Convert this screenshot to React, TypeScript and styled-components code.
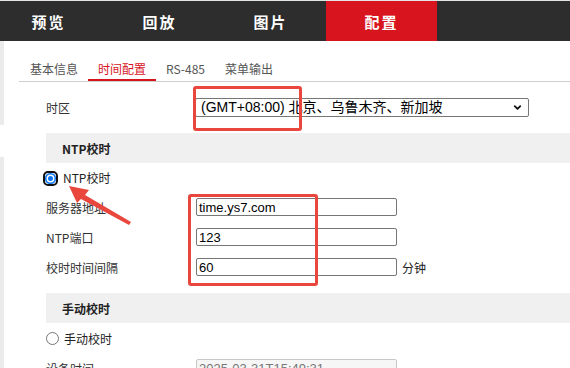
import * as React from "react";
import styled, { createGlobalStyle } from "styled-components";
import { ChevronDown } from "lucide-react";

const GlobalStyle = createGlobalStyle`
  html, body {
    margin: 0;
    padding: 0;
    background: #fff;
  }
  body {
    font-family: "Liberation Sans", Arial, "Noto Sans CJK SC", sans-serif;
    font-size: 12px;
    color: #333;
  }
`;

const SPage = styled.div`
  position: relative;
  width: 570px;
  height: 368px;
  overflow: hidden;
  border-top: 1px solid #e4e4e4;
  box-sizing: border-box;
  display: flex;
  flex-direction: column;
`;

const STopBar = styled.div`
  height: 40px;
  background: #2d2d2d;
  display: flex;
  flex-shrink: 0;
`;

const SNavList = styled.div`
  display: flex;
  margin-left: -7px;
`;

const SNavItem = styled.div<{ $active?: boolean }>`
  width: 111px;
  height: 40px;
  display: flex;
  align-items: center;
  justify-content: center;
  color: #fff;
  font-family: "Noto Sans CJK SC", sans-serif;
  font-size: 15px;
  font-weight: 700;
  letter-spacing: 2px;
  background: ${p => (p.$active ? "#d8141e" : "transparent")};
`;

const SBody = styled.div`
  flex: 1;
  display: flex;
  min-height: 0;
`;

const SRail = styled.div`
  width: 4px;
  display: flex;
  flex-direction: column;
  flex-shrink: 0;
`;

const SRailPiece = styled.div<{ $h?: number; $gap?: boolean }>`
  height: ${p => (p.$h ? `${p.$h}px` : "auto")};
  flex: ${p => (p.$h ? "none" : 1)};
  background: ${p => (p.$gap ? "#fff" : "#ebebeb")};
`;

const SContent = styled.div`
  flex: 1;
  padding-left: 15px;
  min-width: 0;
`;

const STabBar = styled.div`
  display: flex;
  border-bottom: 1px solid #cfcfcf;
  padding-left: 1px;
`;

const STab = styled.div<{ $active?: boolean }>`
  padding: 20px 10px 2px;
  line-height: 16px;
  font-size: 12px;
  font-family: "Noto Sans CJK SC", sans-serif;
  color: ${p => (p.$active ? "#d8141e" : "#555")};
  border-bottom: 2px solid ${p => (p.$active ? "#d8141e" : "transparent")};
`;

const SForm = styled.div`
  padding: 10px 0 0 27px;
  display: flex;
  flex-direction: column;
`;

const SRow = styled.div`
  height: 30px;
  display: flex;
  align-items: center;
`;

const SLabel = styled.div`
  width: 150px;
  flex-shrink: 0;
  font-family: "Noto Sans CJK SC", sans-serif;
  font-size: 12px;
  color: #333;
`;

const SSelectWrap = styled.div`
  position: relative;
  margin-left: -1px;
`;

const SSelect = styled.select`
  appearance: none;
  width: 334px;
  height: 19px;
  box-sizing: border-box;
  border: 1px solid #767676;
  border-radius: 2px;
  padding: 0 0 0 5px;
  font-family: "Liberation Sans", Arial, "Noto Sans CJK SC", sans-serif;
  font-size: 14px;
  line-height: 17px;
  color: #000;
  background: #fff;
`;

const SChevron = styled.span`
  position: absolute;
  right: 6px;
  top: 4px;
  display: flex;
  pointer-events: none;
  color: #111;
`;

const SInput = styled.input`
  width: 201px;
  height: 18px;
  box-sizing: border-box;
  border: 1px solid #767676;
  border-radius: 2px;
  padding: 0 0 0 2px;
  font-family: "Liberation Sans", Arial, sans-serif;
  font-size: 13px;
  color: #000;
  background: #fff;
  &:disabled {
    background: #f6f6f6;
    border-color: #c8c8c8;
    color: #777;
  }
`;

const SUnit = styled.span`
  margin-left: 5px;
  font-family: "Noto Sans CJK SC", sans-serif;
  font-size: 12px;
  color: #222;
`;

const SSection = styled.div`
  margin-top: 11px;
  height: 30px;
  background: #f0f0f0;
  display: flex;
  align-items: center;
  padding-left: 16px;
  font-family: "Noto Sans CJK SC", sans-serif;
  font-size: 12px;
  font-weight: 700;
  color: #222;
`;

const SRadioRow = styled.label<{ $h: number }>`
  height: ${p => p.$h}px;
  display: flex;
  align-items: center;
  font-family: "Noto Sans CJK SC", sans-serif;
  font-size: 12px;
  color: #222;
`;

const SRadioFocus = styled.span`
  width: 15px;
  height: 15px;
  box-sizing: border-box;
  margin: 2px 5px 0 -3px;
  border: 2px solid #111;
  border-radius: 5px;
  display: flex;
  align-items: center;
  justify-content: center;
  & > span {
    width: 11px;
    height: 11px;
    border-radius: 50%;
    background: #0a74f5;
    box-shadow: inset 0 0 0 1.5px #0a74f5, inset 0 0 0 3px #fff;
  }
`;

const SRadioOff = styled.span`
  width: 13px;
  height: 13px;
  box-sizing: border-box;
  margin-right: 5px;
  border: 1px solid #767676;
  border-radius: 50%;
  background: #fff;
`;

const SMark = styled.div`
  position: absolute;
  border: 3px solid #e9473d;
  border-radius: 3px;
  box-sizing: border-box;
  pointer-events: none;
`;

const SArrow = styled.svg`
  position: absolute;
  left: 0;
  top: 0;
  pointer-events: none;
`;

const navItems = ["预览", "回放", "图片", "配置"];
const tabs = ["基本信息", "时间配置", "RS-485", "菜单输出"];

const App = () => {
  return (
    <SPage>
      <GlobalStyle />
      <STopBar>
        <SNavList>
          {navItems.map(item => (
            <SNavItem key={item} $active={item === "配置"}>
              {item}
            </SNavItem>
          ))}
        </SNavList>
      </STopBar>
      <SBody>
        <SRail>
          <SRailPiece $h={84} />
          <SRailPiece $h={32} $gap />
          <SRailPiece />
        </SRail>
        <SContent>
          <STabBar>
            {tabs.map(tab => (
              <STab key={tab} $active={tab === "时间配置"}>
                {tab}
              </STab>
            ))}
          </STabBar>
          <SForm>
            <SRow>
              <SLabel>{"时区"}</SLabel>
              <SSelectWrap>
                <SSelect defaultValue="8">
                  <option value="8">{"(GMT+08:00) 北京、乌鲁木齐、新加坡"}</option>
                </SSelect>
                <SChevron>
                  <ChevronDown size={11} strokeWidth={4} />
                </SChevron>
              </SSelectWrap>
            </SRow>

            <SSection>{"NTP校时"}</SSection>
            <SRadioRow $h={29}>
              <SRadioFocus>
                <span />
              </SRadioFocus>
              {"NTP校时"}
            </SRadioRow>
            <SRow>
              <SLabel>{"服务器地址"}</SLabel>
              <SInput defaultValue="time.ys7.com" />
            </SRow>
            <SRow>
              <SLabel>{"NTP端口"}</SLabel>
              <SInput defaultValue="123" />
            </SRow>
            <SRow>
              <SLabel>{"校时时间间隔"}</SLabel>
              <SInput defaultValue="60" />
              <SUnit>{"分钟"}</SUnit>
            </SRow>

            <SSection>{"手动校时"}</SSection>
            <SRadioRow $h={30}>
              <SRadioOff />
              {"手动校时"}
            </SRadioRow>
            <SRow>
              <SLabel>{"设备时间"}</SLabel>
              <SInput disabled defaultValue="2025-03-31T15:49:31" />
            </SRow>
          </SForm>
        </SContent>
      </SBody>

      <SMark style={{ left: 193, top: 85, width: 109, height: 45 }} />
      <SMark style={{ left: 188, top: 193, width: 130, height: 92 }} />
      <SArrow width={570} height={368} viewBox="0 0 570 368">
        <polygon
          points="69,185 89,189 85,194 131,221 129,224 81,198 77,202"
          fill="#e9473d"
        />
      </SArrow>
    </SPage>
  );
};

export default App;
